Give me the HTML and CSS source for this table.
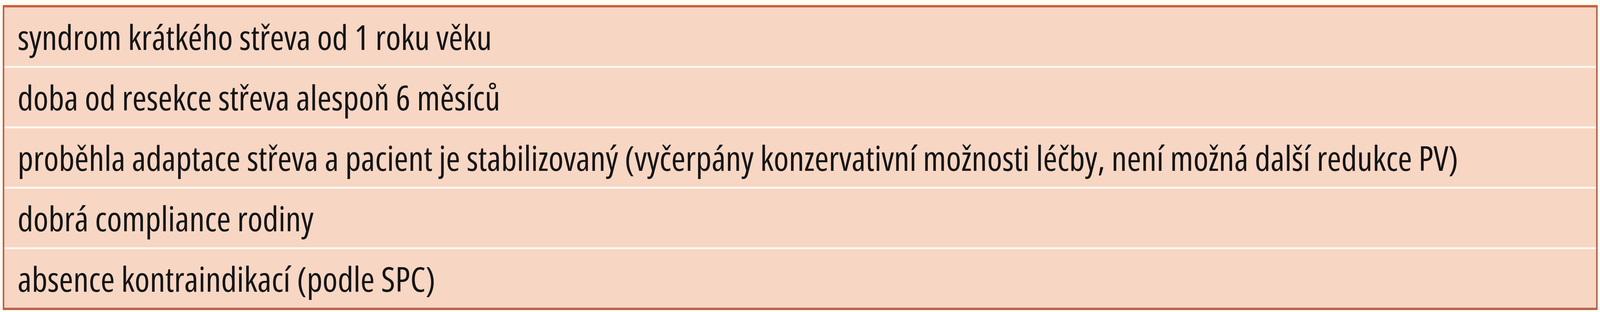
FILE: index.html
```html
<!DOCTYPE html>
<html lang="cs">
<head>
<meta charset="utf-8">
<title>Indikace</title>
<link rel="stylesheet" href="styles.css">
</head>
<body>
<div class="page">
  <div class="criteria">
    <div class="row">syndrom krátkého střeva od 1 roku věku</div>
    <div class="row">doba od resekce střeva alespoň 6 měsíců</div>
    <div class="row">proběhla adaptace střeva a pacient je stabilizovaný (vyčerpány konzervativní možnosti léčby, není možná další redukce PV)</div>
    <div class="row">dobrá compliance rodiny</div>
    <div class="row">absence kontraindikací (podle SPC)</div>
  </div>
</div>
</body>
</html>
```
FILE: styles.css
```css
html, body {
  margin: 0;
  padding: 0;
  background: #fefaf4;
}

/* horizontal metrics are fractions of the 5098px-wide frame */
.page {
  padding: 13px 0.137vw 0 0.1765vw;
}

.criteria {
  display: flex;
  flex-direction: column;
  gap: 5px;
  background: #fdf8f0;
  border-style: solid;
  border-width: 6px 0.118vw;
  border-color: #c9603b #b5674f #b5674f #c9603b;
}

.row {
  height: 150px;
  line-height: 150px;
  padding-left: 0.824vw;
  background: #f7d6c4;
  font-family: "Open Sans", "Noto Sans", sans-serif;
  font-stretch: condensed;
  font-size: 88px;
  letter-spacing: calc(0.7443vw - 30.45px);
  color: #141414;
  white-space: nowrap;
  overflow: hidden;
}
```
